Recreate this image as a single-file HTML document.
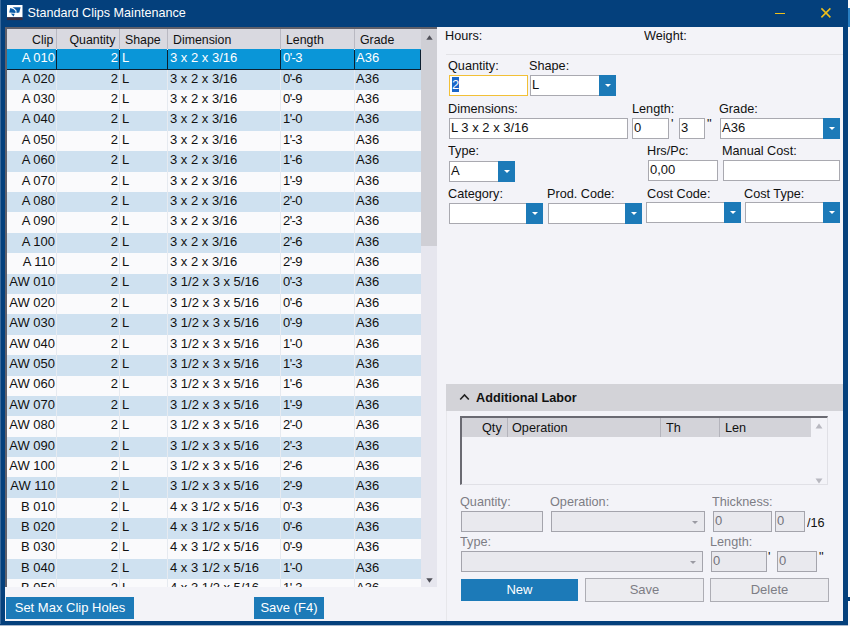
<!DOCTYPE html>
<html><head><meta charset="utf-8"><title>Standard Clips Maintenance</title>
<style>
*{box-sizing:border-box;margin:0;padding:0}
html,body{width:850px;height:626px;overflow:hidden;background:#fbfbfd}
#under{position:absolute;left:0;top:625px;width:848px;height:1px;background:#a9b8cc}
body{font-family:"Liberation Sans",Arial,sans-serif;font-size:13px;color:#111;position:relative}
.abs{position:absolute}
#win{position:absolute;left:0;top:0;width:848px;height:625px;background:#04407c}
#edgeL{position:absolute;left:0;top:0;width:1px;height:624px;background:#3a6a9c}
#title{position:absolute;left:27.5px;top:4px;color:#fff;font-size:12.6px;line-height:18px;white-space:nowrap}
#content{position:absolute;left:5px;top:27px;width:838px;height:594px;background:#f3f3f8}
/* grid */
#grid{position:absolute;left:5px;top:27px;width:432px;height:560px;background:#fff;border-left:2px solid #60606a;border-top:2px solid #60606a;overflow:hidden}
#ghead{position:absolute;left:0;top:0;width:414px;height:20px;background:#d9d9e0;line-height:20px}
#ghead span{position:absolute;top:1px;height:19px;white-space:nowrap;transform:scaleX(.95);transform-origin:0 0}
#ghead span.r{transform-origin:100% 0}
.vl{position:absolute;top:0;width:1px;height:560px;background:#e6eaf0}
.hvl{position:absolute;top:0;width:1px;height:20px;background:#b9b9c2}
#rows{position:absolute;left:0;top:0;width:414px;height:560px}
.row{position:absolute;left:0;width:414px;white-space:nowrap;background:#fafafc}
.row.alt{background:#cfe1f0}
.row.sel{background:#0a96d8;color:#fff;border-bottom:1px solid #0d2030;}
.svl{position:absolute;width:1px;background:#0d2030}
.row span{position:absolute;line-height:17px;height:17px}
.c1{right:366px;text-align:right}
.c2{right:303px;text-align:right}
.c3{left:115px}
.c4{left:163px}
.c5{left:276px;letter-spacing:-.6px}
.c6{left:349px}
#sb{position:absolute;left:414px;top:0;width:16px;height:558px;background:#e6e6ee}
#thumb{position:absolute;left:0;top:0;width:16px;height:217px;background:#cfcfd5}
.lbl{position:absolute;white-space:nowrap;line-height:16px;height:16px;transform:scaleX(.975);transform-origin:0 0}
.dis{color:#7d7d85}
.q{font-size:13px;transform:translateY(-.4px)}
.inp{position:absolute;background:#fff;border:1px solid #a9a9b0;height:21px;line-height:17px;padding-left:1px;white-space:nowrap;overflow:hidden}
.inp.d{background:#e9e9ee;color:#73737c;border-color:#a4a4ac}
.cb{position:absolute;background:#fff;border:1px solid #a9a9b0;height:21px;line-height:18px;padding-left:1px;white-space:nowrap}
.cb i{position:absolute;right:-1px;top:-1px;width:17px;height:21px;background:#1c7ab8}
.cb i:after{content:"";position:absolute;left:5.5px;top:9px;border-left:3px solid transparent;border-right:3px solid transparent;border-top:3.5px solid #fff}
.cb.d{background:#e9e9ee;border-color:#a4a4ac}
.cb.d i{background:transparent}
.cb.d i:after{border-top-color:#9a9aa2;left:4px;top:10px;border-left-width:3px;border-right-width:3px;border-top-width:3px}
.btn{position:absolute;text-align:center;white-space:nowrap}
</style></head><body>
<div id="under"></div>
<div id="win"></div>
<div id="edgeL"></div>
<div class="abs" style="left:848px;top:597px;width:2px;height:4px;background:#04407c"></div>
<!-- title bar -->
<svg class="abs" style="left:7px;top:5px" width="16" height="16" viewBox="0 0 16 16">
<rect x="0" y="0" width="15.5" height="12.3" fill="#fff"/>
<rect x="0" y="12.3" width="15.5" height="2.8" fill="#3a2c3c"/>
<path d="M5.6 2.2 L13.6 2.2 L12.3 7.6 L9.5 8 L9.5 5.4 L7.4 3.4 Z" fill="#0b5aa6"/>
<path d="M3.2 3 L6.3 4 L8.5 6 L8.5 8 L2.2 7.5 Z" fill="#0b5aa6"/>
<path d="M3.7 8.5 L7.7 8.8 L6.6 11.4 Z" fill="#0b5aa6"/>
</svg>
<div id="title">Standard Clips Maintenance</div>
<div class="abs" style="left:775px;top:13px;width:10px;height:1px;background:#efbf1a"></div>
<svg class="abs" style="left:819px;top:6px" width="14" height="14" viewBox="0 0 14 14"><path d="M2.4 2.4 L11.4 11.4 M11.4 2.4 L2.4 11.4" stroke="#efbf1a" stroke-width="1.5" fill="none"/></svg>

<div id="content"></div>
<div class="abs" style="left:848px;top:8px;width:2px;height:19px;background:#2a7fc2"></div>

<!-- grid -->
<div id="grid">
 <div id="rows">
<div class="row sel" style="top:20px;height:21px"><span class="c1" style="top:0px">A 010</span><span class="c2" style="top:0px">2</span><span class="c3" style="top:0px">L</span><span class="c4" style="top:0px">3 x 2 x 3/16</span><span class="c5" style="top:0px">0'-3</span><span class="c6" style="top:0px">A36</span></div>
<div class="row alt" style="top:41px;height:20px"><span class="c1" style="top:0px">A 020</span><span class="c2" style="top:0px">2</span><span class="c3" style="top:0px">L</span><span class="c4" style="top:0px">3 x 2 x 3/16</span><span class="c5" style="top:0px">0'-6</span><span class="c6" style="top:0px">A36</span></div>
<div class="row" style="top:61px;height:21px"><span class="c1" style="top:0px">A 030</span><span class="c2" style="top:0px">2</span><span class="c3" style="top:0px">L</span><span class="c4" style="top:0px">3 x 2 x 3/16</span><span class="c5" style="top:0px">0'-9</span><span class="c6" style="top:0px">A36</span></div>
<div class="row alt" style="top:82px;height:20px"><span class="c1" style="top:-1px">A 040</span><span class="c2" style="top:-1px">2</span><span class="c3" style="top:-1px">L</span><span class="c4" style="top:-1px">3 x 2 x 3/16</span><span class="c5" style="top:-1px">1'-0</span><span class="c6" style="top:-1px">A36</span></div>
<div class="row" style="top:102px;height:20px"><span class="c1" style="top:0px">A 050</span><span class="c2" style="top:0px">2</span><span class="c3" style="top:0px">L</span><span class="c4" style="top:0px">3 x 2 x 3/16</span><span class="c5" style="top:0px">1'-3</span><span class="c6" style="top:0px">A36</span></div>
<div class="row alt" style="top:122px;height:21px"><span class="c1" style="top:0px">A 060</span><span class="c2" style="top:0px">2</span><span class="c3" style="top:0px">L</span><span class="c4" style="top:0px">3 x 2 x 3/16</span><span class="c5" style="top:0px">1'-6</span><span class="c6" style="top:0px">A36</span></div>
<div class="row" style="top:143px;height:20px"><span class="c1" style="top:0px">A 070</span><span class="c2" style="top:0px">2</span><span class="c3" style="top:0px">L</span><span class="c4" style="top:0px">3 x 2 x 3/16</span><span class="c5" style="top:0px">1'-9</span><span class="c6" style="top:0px">A36</span></div>
<div class="row alt" style="top:163px;height:20px"><span class="c1" style="top:0px">A 080</span><span class="c2" style="top:0px">2</span><span class="c3" style="top:0px">L</span><span class="c4" style="top:0px">3 x 2 x 3/16</span><span class="c5" style="top:0px">2'-0</span><span class="c6" style="top:0px">A36</span></div>
<div class="row" style="top:183px;height:21px"><span class="c1" style="top:0px">A 090</span><span class="c2" style="top:0px">2</span><span class="c3" style="top:0px">L</span><span class="c4" style="top:0px">3 x 2 x 3/16</span><span class="c5" style="top:0px">2'-3</span><span class="c6" style="top:0px">A36</span></div>
<div class="row alt" style="top:204px;height:20px"><span class="c1" style="top:0px">A 100</span><span class="c2" style="top:0px">2</span><span class="c3" style="top:0px">L</span><span class="c4" style="top:0px">3 x 2 x 3/16</span><span class="c5" style="top:0px">2'-6</span><span class="c6" style="top:0px">A36</span></div>
<div class="row" style="top:224px;height:21px"><span class="c1" style="top:0px">A 110</span><span class="c2" style="top:0px">2</span><span class="c3" style="top:0px">L</span><span class="c4" style="top:0px">3 x 2 x 3/16</span><span class="c5" style="top:0px">2'-9</span><span class="c6" style="top:0px">A36</span></div>
<div class="row alt" style="top:245px;height:20px"><span class="c1" style="top:-1px">AW 010</span><span class="c2" style="top:-1px">2</span><span class="c3" style="top:-1px">L</span><span class="c4" style="top:-1px">3 1/2 x 3 x 5/16</span><span class="c5" style="top:-1px">0'-3</span><span class="c6" style="top:-1px">A36</span></div>
<div class="row" style="top:265px;height:20px"><span class="c1" style="top:0px">AW 020</span><span class="c2" style="top:0px">2</span><span class="c3" style="top:0px">L</span><span class="c4" style="top:0px">3 1/2 x 3 x 5/16</span><span class="c5" style="top:0px">0'-6</span><span class="c6" style="top:0px">A36</span></div>
<div class="row alt" style="top:285px;height:21px"><span class="c1" style="top:0px">AW 030</span><span class="c2" style="top:0px">2</span><span class="c3" style="top:0px">L</span><span class="c4" style="top:0px">3 1/2 x 3 x 5/16</span><span class="c5" style="top:0px">0'-9</span><span class="c6" style="top:0px">A36</span></div>
<div class="row" style="top:306px;height:20px"><span class="c1" style="top:0px">AW 040</span><span class="c2" style="top:0px">2</span><span class="c3" style="top:0px">L</span><span class="c4" style="top:0px">3 1/2 x 3 x 5/16</span><span class="c5" style="top:0px">1'-0</span><span class="c6" style="top:0px">A36</span></div>
<div class="row alt" style="top:326px;height:21px"><span class="c1" style="top:0px">AW 050</span><span class="c2" style="top:0px">2</span><span class="c3" style="top:0px">L</span><span class="c4" style="top:0px">3 1/2 x 3 x 5/16</span><span class="c5" style="top:0px">1'-3</span><span class="c6" style="top:0px">A36</span></div>
<div class="row" style="top:347px;height:20px"><span class="c1" style="top:-1px">AW 060</span><span class="c2" style="top:-1px">2</span><span class="c3" style="top:-1px">L</span><span class="c4" style="top:-1px">3 1/2 x 3 x 5/16</span><span class="c5" style="top:-1px">1'-6</span><span class="c6" style="top:-1px">A36</span></div>
<div class="row alt" style="top:367px;height:20px"><span class="c1" style="top:0px">AW 070</span><span class="c2" style="top:0px">2</span><span class="c3" style="top:0px">L</span><span class="c4" style="top:0px">3 1/2 x 3 x 5/16</span><span class="c5" style="top:0px">1'-9</span><span class="c6" style="top:0px">A36</span></div>
<div class="row" style="top:387px;height:21px"><span class="c1" style="top:0px">AW 080</span><span class="c2" style="top:0px">2</span><span class="c3" style="top:0px">L</span><span class="c4" style="top:0px">3 1/2 x 3 x 5/16</span><span class="c5" style="top:0px">2'-0</span><span class="c6" style="top:0px">A36</span></div>
<div class="row alt" style="top:408px;height:20px"><span class="c1" style="top:0px">AW 090</span><span class="c2" style="top:0px">2</span><span class="c3" style="top:0px">L</span><span class="c4" style="top:0px">3 1/2 x 3 x 5/16</span><span class="c5" style="top:0px">2'-3</span><span class="c6" style="top:0px">A36</span></div>
<div class="row" style="top:428px;height:20px"><span class="c1" style="top:0px">AW 100</span><span class="c2" style="top:0px">2</span><span class="c3" style="top:0px">L</span><span class="c4" style="top:0px">3 1/2 x 3 x 5/16</span><span class="c5" style="top:0px">2'-6</span><span class="c6" style="top:0px">A36</span></div>
<div class="row alt" style="top:448px;height:21px"><span class="c1" style="top:0px">AW 110</span><span class="c2" style="top:0px">2</span><span class="c3" style="top:0px">L</span><span class="c4" style="top:0px">3 1/2 x 3 x 5/16</span><span class="c5" style="top:0px">2'-9</span><span class="c6" style="top:0px">A36</span></div>
<div class="row" style="top:469px;height:20px"><span class="c1" style="top:0px">B 010</span><span class="c2" style="top:0px">2</span><span class="c3" style="top:0px">L</span><span class="c4" style="top:0px">4 x 3 1/2 x 5/16</span><span class="c5" style="top:0px">0'-3</span><span class="c6" style="top:0px">A36</span></div>
<div class="row alt" style="top:489px;height:21px"><span class="c1" style="top:0px">B 020</span><span class="c2" style="top:0px">2</span><span class="c3" style="top:0px">L</span><span class="c4" style="top:0px">4 x 3 1/2 x 5/16</span><span class="c5" style="top:0px">0'-6</span><span class="c6" style="top:0px">A36</span></div>
<div class="row" style="top:510px;height:20px"><span class="c1" style="top:-1px">B 030</span><span class="c2" style="top:-1px">2</span><span class="c3" style="top:-1px">L</span><span class="c4" style="top:-1px">4 x 3 1/2 x 5/16</span><span class="c5" style="top:-1px">0'-9</span><span class="c6" style="top:-1px">A36</span></div>
<div class="row alt" style="top:530px;height:20px"><span class="c1" style="top:0px">B 040</span><span class="c2" style="top:0px">2</span><span class="c3" style="top:0px">L</span><span class="c4" style="top:0px">4 x 3 1/2 x 5/16</span><span class="c5" style="top:0px">1'-0</span><span class="c6" style="top:0px">A36</span></div>
<div class="row" style="top:550px;height:21px"><span class="c1" style="top:0px">B 050</span><span class="c2" style="top:0px">2</span><span class="c3" style="top:0px">L</span><span class="c4" style="top:0px">4 x 3 1/2 x 5/16</span><span class="c5" style="top:0px">1'-3</span><span class="c6" style="top:0px">A36</span></div>
 </div>
 <div class="vl" style="left:49px"></div><div class="vl" style="left:112px"></div><div class="vl" style="left:160px"></div><div class="vl" style="left:273px"></div><div class="vl" style="left:347px"></div>
 <div class="svl" style="left:49px;top:21px;height:20px"></div><div class="svl" style="left:112px;top:21px;height:20px"></div><div class="svl" style="left:160px;top:21px;height:20px"></div><div class="svl" style="left:273px;top:21px;height:20px"></div><div class="svl" style="left:347px;top:21px;height:20px"></div>
 <div class="svl" style="left:413px;top:21px;height:20px"></div>
 <div id="ghead">
  <span class="r" style="right:368px">Clip</span><span class="r" style="right:306px">Quantity</span><span style="left:118px">Shape</span><span style="left:166px">Dimension</span><span style="left:279px">Length</span><span style="left:353px">Grade</span>
  <div class="hvl" style="left:49px"></div><div class="hvl" style="left:112px"></div><div class="hvl" style="left:160px"></div><div class="hvl" style="left:273px"></div><div class="hvl" style="left:347px"></div>
 </div>
 <div id="sb"><div id="thumb"></div>
  <svg class="abs" style="left:5px;top:6px" width="7" height="5"><path d="M3.5 0.3 L6.7 4.7 L0.3 4.7 Z" fill="#505058"/></svg>
  <svg class="abs" style="left:5px;top:549px" width="7" height="5"><path d="M0.3 0.3 L6.7 0.3 L3.5 4.7 Z" fill="#505058"/></svg>
 </div>
</div>

<!-- left bottom buttons -->
<div class="btn" style="left:6px;top:597px;width:128px;height:22px;line-height:22px;background:#1c7ab8;color:#fff">Set Max Clip Holes</div>
<div class="btn" style="left:254px;top:597px;width:70px;height:22px;line-height:22px;background:#1c7ab8;color:#fff">Save (F4)</div>

<!-- right panel -->
<div class="lbl" style="left:445px;top:28px">Hours:</div>
<div class="lbl" style="left:644px;top:28px">Weight:</div>
<div class="abs" style="left:446px;top:54px;width:397px;height:1px;background:#e2e2e6"></div>

<div class="lbl" style="left:448px;top:58px">Quantity:</div>
<div class="lbl" style="left:529px;top:58px">Shape:</div>
<div class="inp" style="left:449px;top:75px;width:79px;border-color:#f2c037;padding-left:2px"><span style="background:#1a66c9;color:#fff">2</span></div>
<div class="cb" style="left:530px;top:75px;width:86px">L<i></i></div>

<div class="lbl" style="left:448px;top:101px">Dimensions:</div>
<div class="lbl" style="left:632px;top:101px">Length:</div>
<div class="lbl" style="left:719px;top:101px">Grade:</div>
<div class="inp" style="left:449px;top:118px;width:179px">L 3 x 2 x 3/16</div>
<div class="inp" style="left:632px;top:118px;width:37px">0</div>
<div class="lbl q" style="left:671px;top:116px">'</div>
<div class="inp" style="left:679px;top:118px;width:26px">3</div>
<div class="lbl q" style="left:707px;top:116px">"</div>
<div class="cb" style="left:720px;top:118px;width:120px">A36<i></i></div>

<div class="lbl" style="left:448px;top:143px">Type:</div>
<div class="lbl" style="left:647px;top:143px">Hrs/Pc:</div>
<div class="lbl" style="left:722px;top:143px">Manual Cost:</div>
<div class="cb" style="left:449px;top:161px;width:66px">A<i></i></div>
<div class="inp" style="left:648px;top:160px;width:70px">0,00</div>
<div class="inp" style="left:723px;top:160px;width:117px"></div>

<div class="lbl" style="left:448px;top:186px">Category:</div>
<div class="lbl" style="left:547px;top:186px">Prod. Code:</div>
<div class="lbl" style="left:647px;top:186px">Cost Code:</div>
<div class="lbl" style="left:744px;top:186px">Cost Type:</div>
<div class="cb" style="left:449px;top:203px;width:94px"><i></i></div>
<div class="cb" style="left:548px;top:203px;width:94px"><i></i></div>
<div class="cb" style="left:646px;top:202px;width:95px"><i></i></div>
<div class="cb" style="left:745px;top:202px;width:95px"><i></i></div>

<!-- additional labor -->
<div class="abs" style="left:446px;top:411px;width:1px;height:210px;background:#e7e7eb"></div>
<div class="abs" style="left:446px;top:384px;width:397px;height:27px;background:#d3d3d8"></div>
<svg class="abs" style="left:459px;top:393px" width="11" height="8"><path d="M1.2 6.5 L5.5 2 L9.8 6.5" stroke="#222" stroke-width="1.6" fill="none"/></svg>
<div class="lbl" style="left:476px;top:390px;font-weight:bold">Additional Labor</div>

<div class="abs" style="left:460px;top:416px;width:368px;height:69px;background:#f3f3f8;border-left:2px solid #6a6a72;border-top:2px solid #6a6a72;border-right:1px solid #e0e0e6;border-bottom:1px solid #e0e0e6">
 <div class="abs" style="left:0;top:0;width:349px;height:19px;background:#d3d3d9"></div>
 <div class="abs" style="left:45px;top:0;width:1px;height:19px;background:#b4b4bc"></div>
 <div class="abs" style="left:198px;top:0;width:1px;height:19px;background:#b4b4bc"></div>
 <div class="abs" style="left:257px;top:0;width:1px;height:19px;background:#b4b4bc"></div>
 <div class="lbl" style="right:325px;top:2px">Qty</div>
 <div class="lbl" style="left:50px;top:2px">Operation</div>
 <div class="lbl" style="left:204px;top:2px">Th</div>
 <div class="lbl" style="left:263px;top:2px">Len</div>
 <svg class="abs" style="left:353px;top:5px" width="8" height="6"><path d="M4 0.5 L7.5 5.5 L0.5 5.5 Z" fill="#b8b8c0"/></svg>
 <svg class="abs" style="left:353px;top:60px" width="8" height="6"><path d="M0.5 0.5 L7.5 0.5 L4 5.5 Z" fill="#b8b8c0"/></svg>
</div>

<div class="lbl dis" style="left:460px;top:494px">Quantity:</div>
<div class="lbl dis" style="left:550px;top:494px">Operation:</div>
<div class="lbl dis" style="left:712px;top:494px">Thickness:</div>
<div class="inp d" style="left:461px;top:511px;width:82px"></div>
<div class="cb d" style="left:551px;top:511px;width:154px"><i></i></div>
<div class="inp d" style="left:713px;top:511px;width:59px">0</div>
<div class="inp d" style="left:775px;top:511px;width:30px">0</div>
<div class="lbl" style="left:807px;top:515px">/16</div>

<div class="lbl dis" style="left:460px;top:534px">Type:</div>
<div class="lbl dis" style="left:710px;top:534px">Length:</div>
<div class="cb d" style="left:461px;top:551px;width:242px"><i></i></div>
<div class="inp d" style="left:711px;top:551px;width:56px">0</div>
<div class="lbl q" style="left:768px;top:549px">'</div>
<div class="inp d" style="left:777px;top:551px;width:40px">0</div>
<div class="lbl q" style="left:819px;top:549px">"</div>

<div class="btn" style="left:461px;top:579px;width:117px;height:22px;line-height:22px;background:#1c7ab8;color:#fff">New</div>
<div class="btn dis" style="left:585px;top:578px;width:119px;height:24px;line-height:22px;background:#ececf0;border:1px solid #adadb4">Save</div>
<div class="btn dis" style="left:710px;top:578px;width:119px;height:24px;line-height:22px;background:#ececf0;border:1px solid #adadb4">Delete</div>

</body></html>
